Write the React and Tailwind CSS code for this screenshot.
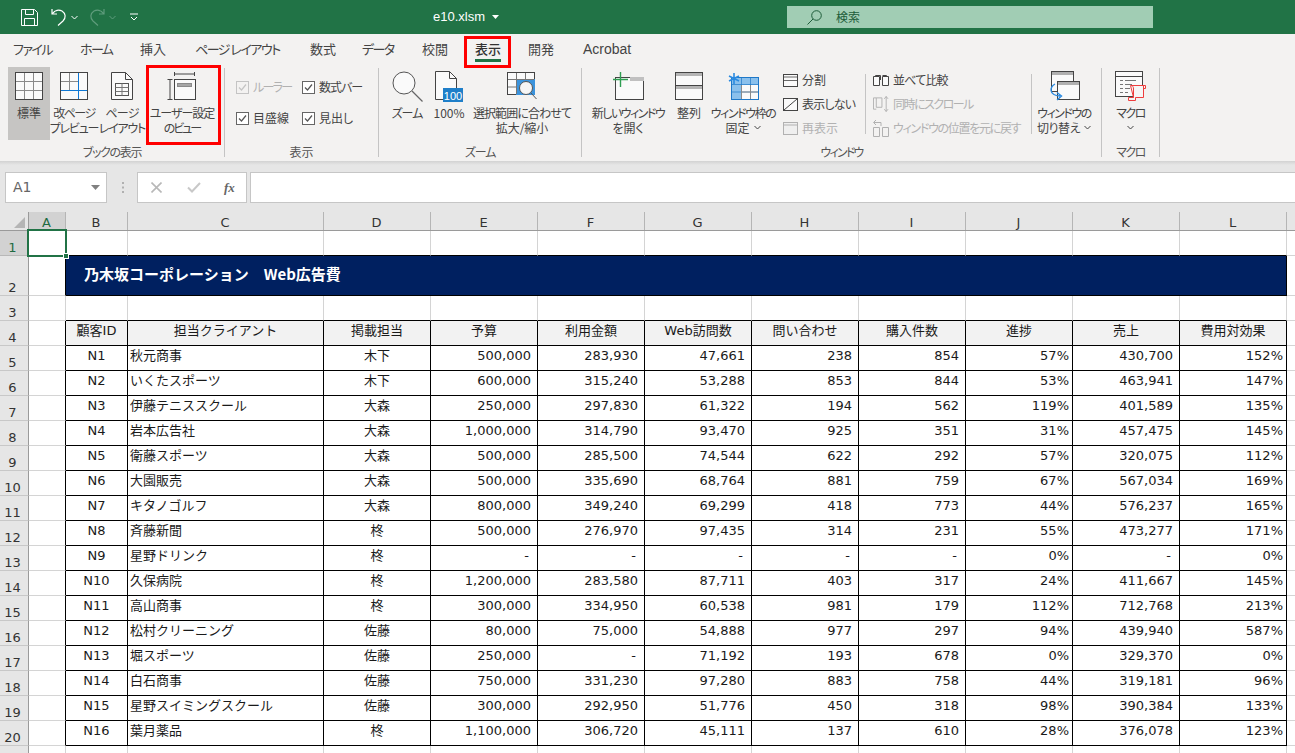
import React from 'react';

const W = ['w-[37px]','w-[62px]','w-[196px]','w-[107px]','w-[107px]','w-[107px]','w-[107px]','w-[107px]','w-[107px]','w-[107px]','w-[107px]','w-[107px]'];
const LETTERS = ['A','B','C','D','E','F','G','H','I','J','K','L'];
const HEAD = ['顧客ID','担当クライアント','掲載担当','予算','利用金額','Web訪問数','問い合わせ','購入件数','進捗','売上','費用対効果'];
const DATA = [
['N1','秋元商事','木下','500,000','283,930','47,661','238','854','57%','430,700','152%'],
['N2','いくたスポーツ','木下','600,000','315,240','53,288','853','844','53%','463,941','147%'],
['N3','伊藤テニススクール','大森','250,000','297,830','61,322','194','562','119%','401,589','135%'],
['N4','岩本広告社','大森','1,000,000','314,790','93,470','925','351','31%','457,475','145%'],
['N5','衛藤スポーツ','大森','500,000','285,500','74,544','622','292','57%','320,075','112%'],
['N6','大園販売','大森','500,000','335,690','68,764','881','759','67%','567,034','169%'],
['N7','キタノゴルフ','大森','800,000','349,240','69,299','418','773','44%','576,237','165%'],
['N8','斉藤新聞','柊','500,000','276,970','97,435','314','231','55%','473,277','171%'],
['N9','星野ドリンク','柊','-','-','-','-','-','0%','-','0%'],
['N10','久保病院','柊','1,200,000','283,580','87,711','403','317','24%','411,667','145%'],
['N11','高山商事','柊','300,000','334,950','60,538','981','179','112%','712,768','213%'],
['N12','松村クリーニング','佐藤','80,000','75,000','54,888','977','297','94%','439,940','587%'],
['N13','堀スポーツ','佐藤','250,000','-','71,192','193','678','0%','329,370','0%'],
['N14','白石商事','佐藤','750,000','331,230','97,280','883','758','44%','319,181','96%'],
['N15','星野スイミングスクール','佐藤','300,000','292,950','51,776','450','318','98%','390,384','133%'],
['N16','葉月薬品','柊','1,100,000','306,720','45,111','137','610','28%','376,078','123%'],
];

const Chev = ({c='#444',className=''}) => (
  <svg width="7" height="5" viewBox="0 0 7 5" className={className}><path d="M0.5 1 L3.5 4 L6.5 1" fill="none" stroke={c} strokeWidth="1"/></svg>
);

const Normal = () => (
  <svg width="28" height="28" viewBox="0 0 28 28"><rect x=".5" y=".5" width="27" height="27" fill="#fafafa" stroke="#444"/><path d="M9.5 1V27M18.5 1V27M1 9.5H27M1 18.5H27" stroke="#8a8a8a"/></svg>
);
const Break = () => (
  <svg width="28" height="28" viewBox="0 0 28 28"><rect x=".5" y=".5" width="27" height="27" fill="#fafafa" stroke="#444"/><path d="M9.5 1V18M1 9.5H18" stroke="#8a8a8a"/><path d="M18.5 1V27M1 18.5H27" stroke="#0f78d4"/></svg>
);
const PageL = () => (
  <svg width="22" height="28" viewBox="0 0 22 28"><path d="M.5.5H14.500L21.500 7.500V27.500H.5Z" fill="#fafafa" stroke="#444"/><path d="M14.500.5V7.500H21.500" fill="none" stroke="#444"/><rect x="4.500" y="11.500" width="13" height="12" fill="none" stroke="#555"/><path d="M4.500 15.500H17.500M4.500 19.500H17.500M11 11.500V23.500" stroke="#777"/></svg>
);
const Custom = () => (
  <svg width="30" height="29" viewBox="0 0 30 29"><path d="M7 2H28M7.500 0V4M27.500 0V4M3 7V27M.5 7.500H5.500M.5 27.500H5.500" fill="none" stroke="#444"/><rect x="7.500" y="7.500" width="21" height="20" fill="#fafafa" stroke="#444"/><rect x="10.500" y="11.500" width="14" height="3" fill="#a6a6a6" stroke="#8a8a8a"/></svg>
);
const Lens = () => (
  <svg width="31" height="31" viewBox="0 0 31 31"><circle cx="12" cy="12" r="11" fill="#fafafa" stroke="#555" strokeWidth="1"/><path d="M20 20L30.500 30.500" stroke="#666" strokeWidth="1.2"/></svg>
);
const Hundred = () => (
  <svg width="28" height="31" viewBox="0 0 28 31"><path d="M.5.5H14.500L21.500 7.500V28.500H.5Z" fill="#fafafa" stroke="#444"/><path d="M14.500.5V7.500H21.500" fill="none" stroke="#444"/><rect x="8" y="17" width="20" height="14" fill="#1f7fc9"/><text x="18" y="28.500" textAnchor="middle" fontSize="11" fill="#fff" fontFamily="Liberation Sans, sans-serif">100</text></svg>
);
const ZoomSel = () => (
  <svg width="30" height="28" viewBox="0 0 30 28"><rect x=".5" y=".5" width="27" height="22" fill="#fafafa" stroke="#444"/><rect x="9" y="7" width="19" height="16" fill="#3b93dc"/><path d="M9.500 1V22M18.500 1V7M1 7.500H27M1 15H9" stroke="#777"/><circle cx="19" cy="16" r="6.500" fill="#f5f5f5" stroke="#555"/><path d="M24 21L29.500 27" stroke="#555"/></svg>
);
const NewWin = () => (
  <svg width="31" height="28" viewBox="0 0 31 28"><rect x="2.500" y="5.500" width="28" height="22" fill="#fafafa" stroke="#444"/><rect x="17" y="5" width="14" height="4" fill="#c0c0c0"/><path d="M0 7.500H15M7.500 0V15" stroke="#2e9e52" strokeWidth="1.4"/></svg>
);
const Arrange = () => (
  <svg width="28" height="28" viewBox="0 0 28 28"><rect x=".5" y=".5" width="27" height="27" fill="#fafafa" stroke="#444"/><rect x="1" y="1" width="26" height="3" fill="#b5b5b5"/><path d="M1 13.500H27" stroke="#444"/><rect x="1" y="14" width="26" height="3" fill="#b5b5b5"/></svg>
);
const Freeze = () => (
  <svg width="31" height="27" viewBox="0 0 31 27"><rect x="3.500" y="4.500" width="27" height="22" fill="#fafafa" stroke="#1e78c8"/><rect x="4" y="5" width="26" height="7" fill="#8ac0ec"/><rect x="4" y="12" width="9" height="14" fill="#8ac0ec"/><path d="M13.500 5V26M22.500 5V26M4 11.500H30M4 19H30" stroke="#1e78c8" strokeWidth=".7"/><path d="M13.500 12V26M22.500 12V26M13 19H30" stroke="#8a8a8a"/><path d="M6 0V11M1 3L11 8M1 8L11 3" stroke="#2a8ae0" strokeWidth="1.6"/></svg>
);
const Split = () => (
  <svg width="15" height="13" viewBox="0 0 15 13"><rect x=".5" y=".5" width="14" height="12" fill="#fafafa" stroke="#444"/><path d="M1 6.500H14M1 3H14" stroke="#444" strokeWidth=".8"/></svg>
);
const Hide = () => (
  <svg width="15" height="13" viewBox="0 0 15 13"><rect x=".5" y=".5" width="14" height="12" fill="#fafafa" stroke="#444"/><path d="M1 12L14 1" stroke="#444"/></svg>
);
const Unhide = () => (
  <svg width="15" height="13" viewBox="0 0 15 13"><rect x=".5" y=".5" width="14" height="12" fill="#efefef" stroke="#b1b1b1"/><path d="M1 3H14" stroke="#b1b1b1"/></svg>
);
const SideBy = ({c='#444'}) => (
  <svg width="16" height="11" viewBox="0 0 16 11"><path d="M.5 1.500H6.500V10.500H.5ZM2.500 1.500V.5H7.500V5M9.500 1.500H15.500V10.500H9.500ZM9.500.5H13.500L15.500 2.500" fill="#fafafa" stroke={c}/></svg>
);
const Sync = () => (
  <svg width="17" height="18" viewBox="0 0 17 18"><path d="M3.500 2.500H.5V14.500H3.500M3.500 2.500H9.500V12.500H3.500Z" fill="none" stroke="#b1b1b1"/><path d="M14 1V17M12 3.500L14 1L16 3.500M12 14.500L14 17L16 14.500" fill="none" stroke="#b1b1b1"/></svg>
);
const Reset = () => (
  <svg width="16" height="18" viewBox="0 0 16 18"><path d="M3 1L.5 3.500L3 6M1 3.500H8V7" fill="none" stroke="#b1b1b1"/><path d="M.5 8.500H6.500V17.500H.5ZM9.500 8.500H15.500V17.500H9.500Z" fill="none" stroke="#b1b1b1"/></svg>
);
const SwitchWin = () => (
  <svg width="31" height="31" viewBox="0 0 31 31"><rect x="2.500" y=".5" width="22" height="20" fill="#fafafa" stroke="#444"/><rect x="3" y="1" width="21" height="3" fill="#b0b0b0"/><rect x="8.500" y="10.500" width="22" height="18" fill="#fafafa" stroke="#444"/><rect x="9" y="11" width="21" height="3" fill="#b0b0b0"/><path d="M6 13C1 16 -1 24 11 25M8 21.500L12.500 25L8 29" fill="none" stroke="#2a8ae0" strokeWidth="1.4"/></svg>
);
const Macro = () => (
  <svg width="31" height="30" viewBox="0 0 31 30"><rect x=".5" y=".5" width="27" height="25" fill="#fafafa" stroke="#444"/><path d="M1 5.500H27" stroke="#444"/><path d="M5 9.500H8M10 9.500H21M5 13.500H8M10 13.500H17M5 17.500H8M10 17.500H15M5 21.500H8M10 21.500H13" stroke="#777"/><path d="M15.500 14.500H28.500V26.500H20.500V29.500H13.500V26.500H18.500Z M16 14.500C18 14.500 18.500 16 18.500 18V26.500M28 14.500H30.500V17.500H28.500" fill="#f6f6f6" stroke="#ee3d3d"/></svg>
);
const Box = ({dim=false}) => {
  const c = dim ? '#c4c4c4' : '#666';
  return <svg width="13" height="13" viewBox="0 0 13 13" className="shrink-0"><rect x=".5" y=".5" width="12" height="12" fill={dim?'#f3f2f1':'#fff'} stroke={c}/><path d="M3 6.500L5.500 9L10 3.500" fill="none" stroke={dim?'#c4c4c4':'#555'} strokeWidth="1.2"/></svg>;
};

const Big = ({w, icon, lines, sel, chev, children}) => (
  <div className={`${w} relative flex flex-col items-center h-[73px] ${sel ? 'bg-[#c6c5c3]' : ''}`}>
    <div className="h-[38px] flex items-center justify-center">{icon}</div>
    {lines.map((l,i)=>(<div key={i} className="h-[15px] leading-[15px] whitespace-nowrap flex items-center gap-[4px]">{l}{chev && i===lines.length-1 && <Chev/>}</div>))}
    {children}
  </div>
);
const Check = ({label,dim,w,t=''}) => (
  <div className={`${w} h-[20px] flex items-center gap-[4px] whitespace-nowrap ${dim?'text-[#b1b1b1]':''}`}><Box dim={dim}/><span className={t}>{label}</span></div>
);
const Small = ({icon,label,dim,t=''}) => (
  <div className={`h-[24px] flex items-center gap-[4px] whitespace-nowrap ${dim?'text-[#b1b1b1]':''}`}><span className="flex w-[16px] justify-center shrink-0">{icon}</span><span className={t}>{label}</span></div>
);
const Group = ({w,label,children,className='',t=''}) => (
  <div className={`${w} shrink-0 flex flex-col`}>
    <div className={`h-[79px] pt-[3px] flex ${className}`}>{children}</div>
    <div className={`h-[18px] leading-[18px] text-center text-[#555] whitespace-nowrap ${t}`}>{label}</div>
  </div>
);
const Sep = () => <div className="w-px h-[89px] mt-[4px] bg-[#c4c4c4] shrink-0"></div>;

const cellBase = 'flex items-center pb-[4px] shrink-0 overflow-hidden whitespace-nowrap';

function GridRow({n,h,sel,children}) {
  return (
    <div className={`${h} flex`}>
      <div className={`w-[29px] shrink-0 border-r border-b border-r-[#9a9a9a] flex items-end justify-center pr-[3px] text-[13px] leading-[15px] ${sel?'bg-[#d2d2d2] text-[#1e6b41] border-b-[#b8b8b8]':'bg-[#e6e6e6] text-[#333] border-b-[#c8c8c8]'}`}>{n}</div>
      {children}
    </div>
  );
}
const Blank = ({w,black,blackR}) => (
  <div className={`${w} shrink-0 border-r border-b ${blackR?'border-r-black':'border-r-[#d4d4d4]'} ${black?'border-b-black':'border-b-[#d4d4d4]'}`}></div>
);
const Tail = () => <div className="flex-1 border-b border-b-[#d4d4d4]"></div>;

function pad(t,i){
  if (i===0||i===2) return 'justify-center';
  if (i===1) return 'pl-[2px]';
  if (t==='-') return 'justify-end pr-[8px]';
  if (t.endsWith('%')) return 'justify-end pr-[3px]';
  return 'justify-end pr-[6px]';
}

export default function App() {
  return (
    <div className="w-[1295px] h-[753px] overflow-hidden bg-white text-[#444] [font-family:'Noto_Sans_CJK_JP',sans-serif]">
      {/* title bar */}
      <div className="h-[34px] bg-[#217346] flex items-center pl-[21px] text-white">
        <svg width="17" height="17" viewBox="0 0 17 17"><path d="M.5.5H13.500L16.500 3.500V16.500H.5Z M4.500.5V5.500H12.500V.5M3.500 16.500V9.500H13.500V16.500" fill="none" stroke="#fff"/></svg>
        <svg className="ml-[13px]" width="16" height="18" viewBox="0 0 16 18"><path d="M1 1V6H6M1.500 5.500C4 2 8 1.500 11 3C15 5.500 15 10 12 13L7 17.500" fill="none" stroke="#fff" strokeWidth="1.2"/></svg>
        <Chev c="#fff" className="ml-[4px]"/>
        <svg className="ml-[11px]" width="16" height="18" viewBox="0 0 16 18"><path d="M15 1V6H10M14.500 5.500C12 2 8 1.500 5 3C1 5.500 1 10 4 13L9 17.500" fill="none" stroke="#5f9c7c" strokeWidth="1.2"/></svg>
        <Chev c="#5f9c7c" className="ml-[4px]"/>
        <svg className="ml-[14px]" width="8" height="8" viewBox="0 0 8 8"><path d="M0 1H8M1 4L4 7L7 4" fill="none" stroke="#fff"/></svg>
        <div className="ml-[295px] w-[354px] flex items-center gap-[7px] text-[13px] [font-family:'Liberation_Sans',sans-serif]">
          <span>e10.xlsm</span>
          <svg width="7" height="4" viewBox="0 0 7 4"><path d="M0 0H7L3.500 4Z" fill="#fff"/></svg>
        </div>
        <div className="w-[366px] h-[22px] bg-[#a1cdb4] flex items-center pl-[20px] text-[#1d5c39] text-[12px]">
          <svg width="15" height="15" viewBox="0 0 15 15"><circle cx="9.500" cy="5.500" r="4.800" fill="none" stroke="#1d5c39"/><path d="M6 9L.5 14.500" stroke="#1d5c39"/></svg>
          <span className="ml-[14px]">検索</span>
        </div>
      </div>

      {/* tabs */}
      <div className="h-[30px] bg-[#f3f2f1] flex items-start pt-[5px] pl-[13px] text-[13px] leading-[20px] [font-feature-settings:'palt'] text-[#444] whitespace-nowrap">
        <span className="w-[38px] tracking-[-1.5px]">ファイル</span>
        <span className="w-[33px] ml-[29px] tracking-[-1.6px]">ホーム</span>
        <span className="w-[26px] ml-[27px]">挿入</span>
        <span className="w-[86px] ml-[29px] tracking-[-1.5px]">ページ レイアウト</span>
        <span className="w-[26px] ml-[29px]">数式</span>
        <span className="w-[33px] ml-[26px] tracking-[-1.6px]">データ</span>
        <span className="w-[26px] ml-[27px]">校閲</span>
        <span className="relative w-[26px] ml-[27px] font-medium text-[#333]">表示
          <span className="absolute left-0 right-0 top-[20px] h-[3px] bg-[#217346]"></span>
          <span className="absolute -left-[11px] -right-[10px] -top-[3px] h-[32px] border-[3px] border-[#f00] z-10"></span>
        </span>
        <span className="w-[26px] ml-[27px]">開発</span>
        <span className="ml-[29px] text-[14px] [font-family:'Liberation_Sans',sans-serif]">Acrobat</span>
      </div>

      {/* ribbon */}
      <div className="h-[97px] bg-[#f3f2f1] flex text-[12px] [font-feature-settings:'palt']">
        <Group w="w-[224px]" label="ブックの表示" className="pl-[8px]" t="tracking-[-1.3px]">
          <Big w="w-[42px]" icon={<Normal/>} lines={['標準']} sel/>
          <Big w="w-[48px]" icon={<Break/>} lines={[<span className="tracking-[-1.5px]">改ページ</span>,<span className="tracking-[-1.2px]">プレビュー</span>]}/>
          <Big w="w-[48px]" icon={<PageL/>} lines={[<span className="tracking-[-0.8px]">ページ</span>,<span className="tracking-[-1.2px]">レイアウト</span>]}/>
          <Big w="w-[72px]" icon={<Custom/>} lines={[<span className="tracking-[-1px]">ユーザー設定</span>,<span className="tracking-[-2px]">のビュー</span>]}>
            <div className="absolute left-0 -top-[2px] w-[75px] h-[80px] border-[3px] border-[#f00]"></div>
          </Big>
        </Group>
        <Sep/>
        <Group w="w-[153px]" label="表示" className="flex-col pl-[11px]">
          <div className="flex mt-[10px]"><Check w="w-[66px]" label="ルーラー" dim t="tracking-[-1.7px]"/><Check w="w-[70px]" label="数式バー" t="tracking-[-1px]"/></div>
          <div className="flex mt-[11px]"><Check w="w-[66px]" label="目盛線"/><Check w="w-[70px]" label="見出し"/></div>
        </Group>
        <Sep/>
        <Group w="w-[202px]" label="ズーム" className="pl-[2px]" t="tracking-[-1.2px]">
          <Big w="w-[52px]" icon={<Lens/>} lines={[<span className="tracking-[-1px]">ズーム</span>]}/>
          <Big w="w-[32px]" icon={<Hundred/>} lines={['100%']}/>
          <Big w="w-[114px]" icon={<ZoomSel/>} lines={[<span className="tracking-[-0.9px]">選択範囲に合わせて</span>,'拡大/縮小']}/>
        </Group>
        <Sep/>
        <Group w="w-[519px]" label="ウィンドウ" className="pl-[4px]" t="tracking-[-1.8px]">
          <Big w="w-[84px]" icon={<NewWin/>} lines={[<span className="tracking-[-1.5px]">新しいウィンドウ</span>,'を開く']}/>
          <Big w="w-[38px]" icon={<Arrange/>} lines={['整列']}/>
          <Big w="w-[70px]" icon={<Freeze/>} lines={[<span className="tracking-[-1.4px]">ウィンドウ枠の</span>,'固定']} chev/>
          <div className="w-[83px] ml-[4px] pt-[1px] flex flex-col">
            <Small icon={<Split/>} label="分割"/>
            <Small icon={<Hide/>} label="表示しない" t="tracking-[-0.8px]"/>
            <Small icon={<Unhide/>} label="再表示" dim/>
          </div>
          <div className="w-px h-[60px] mt-[7px] bg-[#c4c4c4]"></div>
          <div className="w-[165px] pl-[7px] pt-[1px] flex flex-col">
            <Small icon={<SideBy/>} label="並べて比較" t="tracking-[-0.8px]"/>
            <Small icon={<Sync/>} label="同時にスクロール" dim t="tracking-[-1.5px]"/>
            <Small icon={<Reset/>} label="ウィンドウの位置を元に戻す" dim t="tracking-[-1.3px]"/>
          </div>
          <div className="w-px h-[60px] mt-[7px] bg-[#c4c4c4]"></div>
          <Big w="w-[64px]" icon={<SwitchWin/>} lines={[<span className="tracking-[-1.5px]">ウィンドウの</span>,<span className="tracking-[-0.5px]">切り替え</span>]} chev/>
        </Group>
        <Sep/>
        <Group w="w-[57px]" label="マクロ" t="tracking-[-1.5px]">
          <div className="w-full flex flex-col items-center h-[73px]">
            <div className="h-[38px] flex items-center justify-center"><Macro/></div>
            <div className="h-[15px] leading-[15px] tracking-[-1.5px]">マクロ</div>
            <div className="h-[15px] flex items-center"><Chev/></div>
          </div>
        </Group>
        <Sep/>
      </div>

      {/* formula bar */}
      <div className="h-[4px] bg-linear-to-b from-[#d2d2d2] to-[#e6e6e6]"></div>
      <div className="h-[47px] bg-[#e6e6e6] pt-[7px] flex items-start pl-[5px]">
        <div className="w-[102px] h-[31px] bg-white border border-[#c6c6c6] flex items-center justify-between pl-[7px] pr-[6px] text-[14px] text-[#666] [font-family:'DejaVu_Sans',sans-serif]">
          <span>A1</span>
          <svg width="9" height="5" viewBox="0 0 9 5"><path d="M0 0H9L4.500 5Z" fill="#808080"/></svg>
        </div>
        <div className="w-[30px] h-[31px] flex items-center justify-center">
          <svg width="3" height="11" viewBox="0 0 3 11"><path d="M1 0h2v2H1zM1 4.500h2v2H1zM1 9h2v2H1z" fill="#b0b0b0"/></svg>
        </div>
        <div className="w-[110px] h-[31px] bg-white border border-[#c6c6c6] flex items-center pl-[13px]">
          <svg width="11" height="11" viewBox="0 0 11 11"><path d="M.5.5L10.500 10.500M10.500.5L.5 10.500" stroke="#b8b8b8" strokeWidth="1.6"/></svg>
          <svg className="ml-[25px]" width="14" height="11" viewBox="0 0 14 11"><path d="M1 5.500L5 9.500L13 1" fill="none" stroke="#c8c8c8" strokeWidth="2"/></svg>
          <span className="ml-[23px] text-[13px] font-bold italic text-[#666] [font-family:'Liberation_Serif',serif]">fx</span>
        </div>
        <div className="flex-1 ml-[3px] h-[31px] bg-white border-y border-l border-[#c6c6c6]"></div>
      </div>

      {/* grid */}
      <div className="[font-family:'DejaVu_Sans','Noto_Sans_CJK_JP',sans-serif] text-[13px] text-[#1a1a1a]">
        <div className="h-[19px] flex bg-[#e6e6e6] border-b border-b-[#9a9a9a]">
          <div className="w-[29px] shrink-0 border-r border-r-[#9a9a9a] flex items-end justify-end pr-[3px] pb-[2px]">
            <svg width="11" height="11" viewBox="0 0 11 11"><path d="M11 0V11H0Z" fill="#b5b5b5"/></svg>
          </div>
          {LETTERS.map((l,i)=>(
            <div key={l} className={`${W[i]} shrink-0 border-r border-r-[#b5b5b5] flex items-center justify-center pt-[3px] pr-[1px] leading-[15px] ${i===0?'bg-[#d2d2d2] text-[#1e6b41] border-b-2 border-b-[#217346] h-[19px]':'text-[#333]'}`}>{l}</div>
          ))}
          <div className="flex-1"></div>
        </div>

        <GridRow n="1" h="h-[25px]" sel>
          <div className="w-[37px] shrink-0 relative border-r border-b border-r-[#d4d4d4] border-b-[#d4d4d4]">
            <div className="absolute -left-[2px] -top-[2px] w-[40px] h-[28px] border-2 border-[#217346] z-10"></div>
            <div className="absolute left-[34px] top-[22px] w-[6px] h-[6px] bg-[#217346] border border-white z-20"></div>
          </div>
          {W.slice(1).map((w,i)=>(<Blank key={i} w={w} black/>))}
          <Tail/>
        </GridRow>
        <GridRow n="2" h="h-[40px]">
          <Blank w="w-[37px]" blackR/>
          <div className="w-[1221px] shrink-0 bg-[#002060] border-r border-b border-r-black border-b-black flex items-center pl-[18px] pb-[3px] text-[15px] font-bold text-white whitespace-pre [font-family:'Noto_Sans_CJK_JP',sans-serif]">乃木坂コーポレーション　Web広告費</div>
          <Tail/>
        </GridRow>
        <GridRow n="3" h="h-[25px]">
          <Blank w="w-[37px]"/>
          {W.slice(1).map((w,i)=>(<Blank key={i} w={w} black/>))}
          <Tail/>
        </GridRow>
        <GridRow n="4" h="h-[25px]">
          <Blank w="w-[37px]" blackR/>
          {HEAD.map((t,i)=>(
            <div key={i} className={`${W[i+1]} ${cellBase} justify-center bg-[#f2f2f2] border-r border-b border-black`}>{t}</div>
          ))}
          <Tail/>
        </GridRow>
        {DATA.map((r,ri)=>(
          <GridRow key={ri} n={String(ri+5)} h="h-[25px]">
            <Blank w="w-[37px]" blackR/>
            {r.map((t,i)=>(
              <div key={i} className={`${W[i+1]} ${cellBase} border-r border-b border-black ${pad(t,i)}`}>{t}</div>
            ))}
            <Tail/>
          </GridRow>
        ))}
        <GridRow n="" h="h-[25px]">
          {W.map((w,i)=>(<Blank key={i} w={w}/>))}
          <Tail/>
        </GridRow>
      </div>
    </div>
  );
}
